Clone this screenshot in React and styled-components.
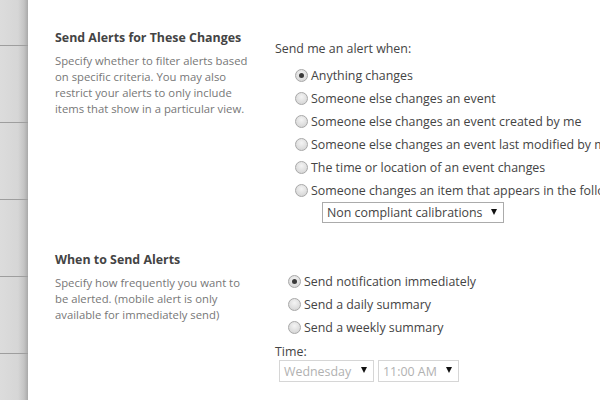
import React from "react";
import styled, { createGlobalStyle } from "styled-components";

const Global = createGlobalStyle`
  html, body { margin: 0; padding: 0; background: #fff; }
  body { width: 600px; height: 400px; overflow: hidden; font-family: "Open Sans", "Noto Sans", sans-serif; }
`;

const Page = styled.div`
  display: flex;
  width: 600px;
  height: 400px;
  overflow: hidden;
`;

const SideStrip = styled.div`
  width: 28px;
  flex: none;
  display: flex;
  flex-direction: column;
  padding-top: 45px;
  background: linear-gradient(to right, #dcdcdc 0, #d6d6d6 18px, #c4c4c4 24px, #a9a9a9 28px);
`;

const StripCell = styled.div`
  height: 76px;
  flex: none;
  border-top: 1px solid #9e9e9e;
`;

const Main = styled.div`
  flex: 1;
  padding: 29px 0 0 27px;
  display: flex;
  flex-direction: column;
  gap: 28px;
  min-width: 0;
`;

const Section = styled.section`
  display: grid;
  grid-template-columns: 220px 1fr;
  min-width: 0;
`;

const Info = styled.div`
  display: flex;
  flex-direction: column;
`;

const Heading = styled.h3`
  margin: 0 0 6px;
  font-size: 12.4px;
  font-weight: 700;
  color: #444;
  line-height: 18px;
  white-space: nowrap;
`;

const Desc = styled.p`
  margin: 0;
  font-size: 11.3px;
  line-height: 16px;
  color: #777;
  width: 200px;
`;

const Controls = styled.div`
  padding-top: ${(p) => p.$top}px;
  display: flex;
  flex-direction: column;
  white-space: nowrap;
  min-width: 0;
`;

const Label = styled.div`
  font-size: 12.4px;
  color: #444;
  line-height: 16px;
  margin-top: ${(p) => p.$mt || 0}px;
  margin-bottom: ${(p) => p.$mb}px;
`;

const RadioList = styled.div`
  display: flex;
  flex-direction: column;
  padding-left: ${(p) => p.$indent}px;
`;

const RadioRow = styled.label`
  display: flex;
  align-items: center;
  gap: 3px;
  height: 23px;
  font-size: 12.4px;
  color: #444;
`;

const RadioDot = styled.span`
  width: 11px;
  height: 11px;
  border-radius: 50%;
  border: 1px solid #a8a8a8;
  background: radial-gradient(circle at 50% 35%, #f4f4f4 0, #dedede 60%, #cfcfcf 100%);
  display: flex;
  align-items: center;
  justify-content: center;
  flex: none;
  &::after {
    content: "";
    width: 5px;
    height: 5px;
    border-radius: 50%;
    background: ${(p) => (p.$checked ? "#3a3a3a" : "transparent")};
  }
`;

const SelectBox = styled.div`
  display: inline-flex;
  align-items: center;
  justify-content: space-between;
  box-sizing: border-box;
  width: ${(p) => p.$w}px;
  height: ${(p) => p.$h}px;
  border: 1px solid ${(p) => (p.$disabled ? "#d6d6d6" : "#ababab")};
  padding: 0 6px 0 4px;
  font-size: 12.4px;
  color: ${(p) => (p.$disabled ? "#b1b1b1" : "#444")};
  background: #fff;
`;

const Arrow = styled.span`
  width: 0;
  height: 0;
  border-left: 3px solid transparent;
  border-right: 3px solid transparent;
  border-top: 6px solid #111;
  margin-bottom: 2px;
`;

const SelectWrap = styled.div`
  padding-left: ${(p) => p.$indent}px;
  display: flex;
  gap: 4px;
`;

const changes = [
  "Anything changes",
  "Someone else changes an event",
  "Someone else changes an event created by me",
  "Someone else changes an event last modified by me",
  "The time or location of an event changes",
  "Someone changes an item that appears in the following view:",
];

const when = ["Send notification immediately", "Send a daily summary", "Send a weekly summary"];

export default function App() {
  return (
    <>
      <Global />
      <Page>
        <SideStrip>
          <StripCell />
          <StripCell />
          <StripCell />
          <StripCell />
          <StripCell />
        </SideStrip>
        <Main>
          <Section>
            <Info>
              <Heading>Send Alerts for These Changes</Heading>
              <Desc>
                Specify whether to filter alerts based on specific criteria. You may also restrict your alerts to only include items that show in a particular view.
              </Desc>
            </Info>
            <Controls $top={12}>
              <Label $mb={7}>Send me an alert when:</Label>
              <RadioList $indent={20}>
                {changes.map((t, i) => (
                  <RadioRow key={t}>
                    <RadioDot $checked={i === 0} />
                    {t}
                  </RadioRow>
                ))}
              </RadioList>
              <SelectWrap $indent={47}>
                <SelectBox $w={182} $h={21}>
                  Non compliant calibrations
                  <Arrow />
                </SelectBox>
              </SelectWrap>
            </Controls>
          </Section>
          <Section>
            <Info>
              <Heading>When to Send Alerts</Heading>
              <Desc>
                Specify how frequently you want to be alerted. (mobile alert is only available for immediately send)
              </Desc>
            </Info>
            <Controls $top={19}>
              <RadioList $indent={13}>
                {when.map((t, i) => (
                  <RadioRow key={t}>
                    <RadioDot $checked={i === 0} />
                    {t}
                  </RadioRow>
                ))}
              </RadioList>
              <Label $mt={5} $mb={0}>Time:</Label>
              <SelectWrap $indent={4}>
                <SelectBox $w={95} $h={22} $disabled>
                  Wednesday
                  <Arrow />
                </SelectBox>
                <SelectBox $w={81} $h={22} $disabled>
                  11:00 AM
                  <Arrow />
                </SelectBox>
              </SelectWrap>
            </Controls>
          </Section>
        </Main>
      </Page>
    </>
  );
}
